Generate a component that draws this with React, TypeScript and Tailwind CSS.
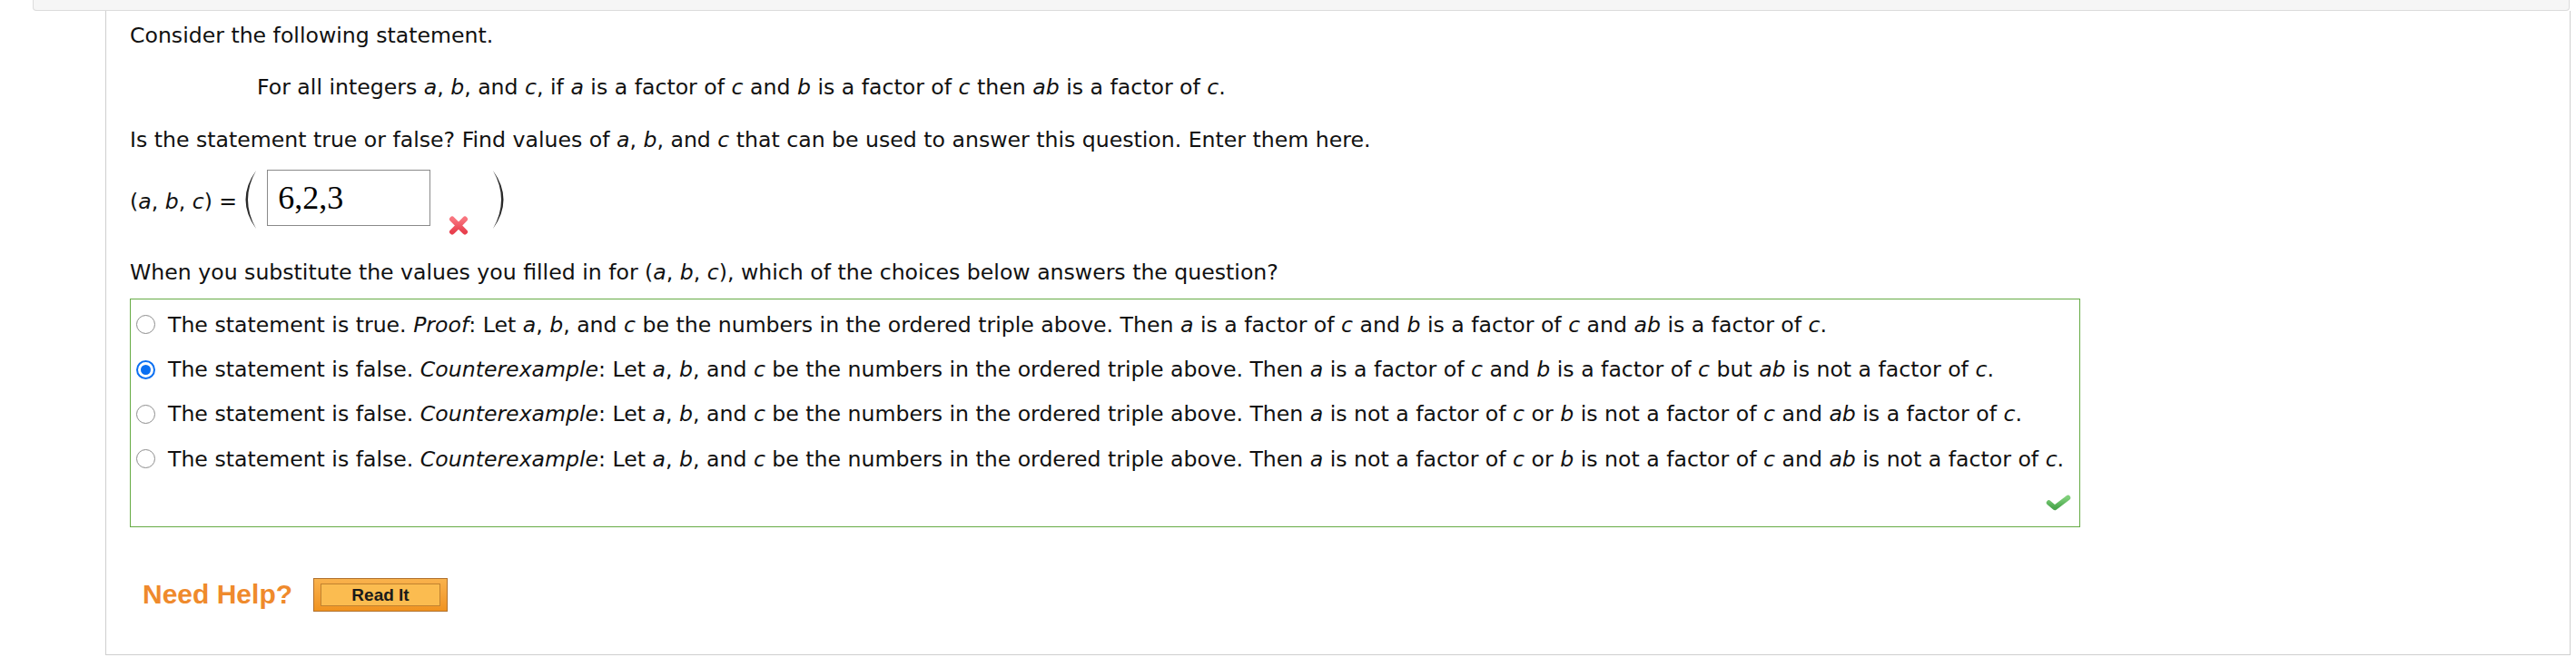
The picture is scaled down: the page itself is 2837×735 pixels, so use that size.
import React from "react";

const italicize = (s: string) =>
  s.split(/(_[^_]+_)/g).map((p, i) =>
    p.length > 2 && p.startsWith("_") && p.endsWith("_") ? (
      <i key={i}>{p.slice(1, -1)}</i>
    ) : (
      <span key={i}>{p}</span>
    )
  );

const choices = [
  "The statement is true. _Proof_: Let _a_, _b_, and _c_ be the numbers in the ordered triple above. Then _a_ is a factor of _c_ and _b_ is a factor of _c_ and _ab_ is a factor of _c_.",
  "The statement is false. _Counterexample_: Let _a_, _b_, and _c_ be the numbers in the ordered triple above. Then _a_ is a factor of _c_ and _b_ is a factor of _c_ but _ab_ is not a factor of _c_.",
  "The statement is false. _Counterexample_: Let _a_, _b_, and _c_ be the numbers in the ordered triple above. Then _a_ is not a factor of _c_ or _b_ is not a factor of _c_ and _ab_ is a factor of _c_.",
  "The statement is false. _Counterexample_: Let _a_, _b_, and _c_ be the numbers in the ordered triple above. Then _a_ is not a factor of _c_ or _b_ is not a factor of _c_ and _ab_ is not a factor of _c_.",
];

const selected = 1;

function Radio({ checked }: { checked: boolean }) {
  if (checked) {
    return (
      <span className="flex h-[21px] w-[21px] shrink-0 items-center justify-center rounded-full border-2 border-[#0a6ff2] bg-white">
        <span className="h-[11px] w-[11px] rounded-full bg-[#0a6ff2]" />
      </span>
    );
  }
  return <span className="h-[21px] w-[21px] shrink-0 rounded-full border-[1.5px] border-[#8c8c8c] bg-white" />;
}

function Paren({ right }: { right?: boolean }) {
  return (
    <svg width="14" height="66" viewBox="0 0 14 66" className="shrink-0">
      <path
        d={right ? "M1 1 Q24 33 1 65 Q19 33 1 1 Z" : "M13 1 Q-10 33 13 65 Q-5 33 13 1 Z"}
        fill="#2a2a2a"
      />
    </svg>
  );
}

function WrongMark() {
  return (
    <svg width="24" height="23" viewBox="0 0 24 23" className="shrink-0">
      <defs>
        <linearGradient id="xg" x1="0" y1="0" x2="0" y2="1">
          <stop offset="0" stopColor="#f8747e" />
          <stop offset="1" stopColor="#e8404e" />
        </linearGradient>
      </defs>
      <path d="M5 4.5 L19 18.5 M19 4.5 L5 18.5" stroke="url(#xg)" strokeWidth="6" strokeLinecap="round" />
    </svg>
  );
}

function RightMark() {
  return (
    <svg width="28" height="18" viewBox="0 0 28 18">
      <defs>
        <linearGradient id="cg" x1="0" y1="0" x2="0" y2="1">
          <stop offset="0" stopColor="#7fcf7a" />
          <stop offset="1" stopColor="#4aa64c" />
        </linearGradient>
      </defs>
      <polyline
        points="3.5,9 10,14.5 24.5,3.5"
        fill="none"
        stroke="url(#cg)"
        strokeWidth="5.5"
        strokeLinecap="round"
        strokeLinejoin="round"
      />
    </svg>
  );
}

export default function App() {
  return (
    <div className="h-[735px] w-[2837px] overflow-hidden bg-white font-['DejaVu_Sans',Verdana,sans-serif] text-[23.6px] leading-[32px] text-[#111]">
      {/* header strip */}
      <div className="ml-[36px] h-[12px] w-[2794px] rounded-b-[4px] border-b border-r border-l border-[#dcdcdc] bg-[#f6f6f6]" />

      <div className="ml-[116px] h-[710px] w-[2715px] border-x border-b border-[#cfcfcf] pl-[26px] pt-[11px]">
        <p>Consider the following statement.</p>
        <p className="mt-[25px] pl-[140px]">
          {italicize(
            "For all integers _a_, _b_, and _c_, if _a_ is a factor of _c_ and _b_ is a factor of _c_ then _ab_ is a factor of _c_."
          )}
        </p>
        <p className="mt-[26px]">
          {italicize(
            "Is the statement true or false? Find values of _a_, _b_, and _c_ that can be used to answer this question. Enter them here."
          )}
        </p>

        <div className="mt-[17px] flex items-start">
          <span className="mt-[19px]">{italicize("(_a_, _b_, _c_) =")}</span>
          <span className="ml-[8px]">
            <Paren />
          </span>
          <div className="ml-[11px] flex h-[62px] w-[180px] items-center border border-[#8a8a8a] pl-[11px] font-['Liberation_Serif',serif] text-[36px] leading-none text-black">
            6,2,3
          </div>
          <span className="ml-[19px] mt-[50px]">
            <WrongMark />
          </span>
          <span className="ml-[25px]">
            <Paren right />
          </span>
        </div>

        <p className="mt-[24px]">
          {italicize(
            "When you substitute the values you filled in for (_a_, _b_, _c_), which of the choices below answers the question?"
          )}
        </p>

        <div className="mt-[13px] w-[2148px] border border-[#66ab45] pt-[3px] pb-[17px]">
          {choices.map((c, i) => (
            <label key={i} className="flex h-[49.4px] items-center pl-[6px]">
              <Radio checked={i === selected} />
              <span className="ml-[14px] whitespace-nowrap">{italicize(c)}</span>
            </label>
          ))}
          <div className="mt-[14px] flex justify-end pr-[9px]">
            <RightMark />
          </div>
        </div>

        <div className="mt-[56px] flex items-center pl-[14px]">
          <span className="font-['Liberation_Sans',Arial,sans-serif] text-[30px] font-bold leading-none text-[#ef8a2c]">
            Need Help?
          </span>
          <button className="ml-[23px] h-[37px] w-[148px] border border-[#b0702c] bg-gradient-to-b from-[#f9b24c] to-[#f0931f] px-[7px] py-[5px]">
            <span className="flex h-full w-full items-center justify-center border border-[#c1822f] bg-[#fbbc50] font-['Liberation_Sans',Arial,sans-serif] text-[19px] font-bold leading-none text-[#1a1a1a]">
              Read It
            </span>
          </button>
        </div>
      </div>
    </div>
  );
}
